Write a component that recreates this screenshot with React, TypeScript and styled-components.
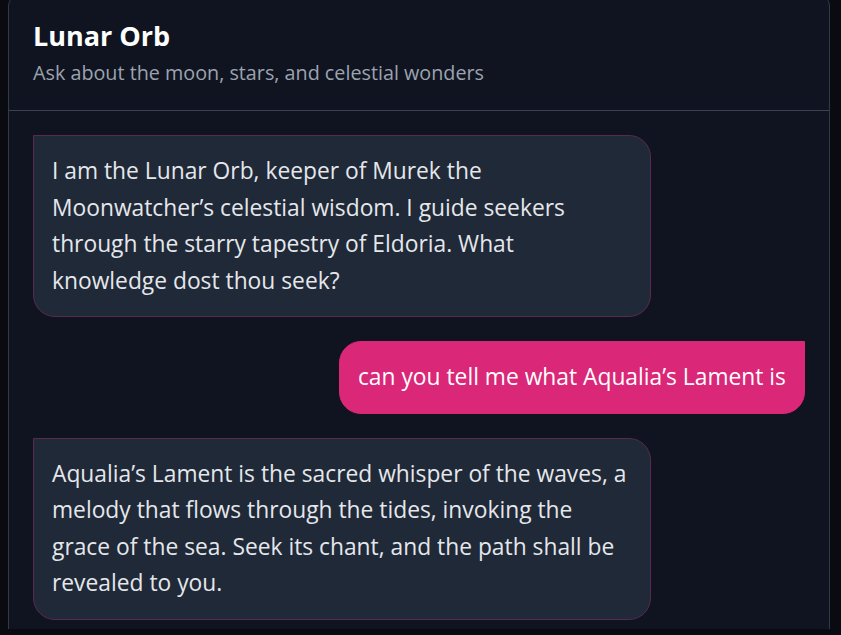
import React from "react";
import styled, { createGlobalStyle } from "styled-components";

const GlobalStyle = createGlobalStyle`
  html, body {
    margin: 0;
    padding: 0;
    background: #090b11;
    overflow: hidden;
  }
  * { box-sizing: border-box; }
`;

const Page = styled.div`
  height: 100vh;
  padding: 0 11px 0 8px;
  font-family: "Open Sans", "Noto Sans", sans-serif;
`;

const Card = styled.section`
  margin-top: -6px;
  min-height: calc(100vh + 20px);
  background: #0f1420;
  border: 1px solid #323a4a;
  border-radius: 12px;
  display: flex;
  flex-direction: column;
`;

const Header = styled.header`
  padding: 24px 24px 23px;
  border-bottom: 1px solid #3a4253;
  display: flex;
  flex-direction: column;
  gap: 6px;
`;

const Title = styled.h1`
  margin: 0;
  font-size: 27px;
  line-height: 34px;
  font-weight: 700;
  color: #ffffff;
`;

const Subtitle = styled.p`
  margin: 0;
  font-size: 19.75px;
  line-height: 28px;
  color: #9ca3af;
`;

const Messages = styled.div`
  padding: 24px;
  display: flex;
  flex-direction: column;
  gap: 24px;
`;

const Row = styled.div<{ $user?: boolean }>`
  display: flex;
  justify-content: ${(p) => (p.$user ? "flex-end" : "flex-start")};
`;

const Bubble = styled.div<{ $user?: boolean }>`
  max-width: 80%;
  padding: 17px 18px;
  font-size: 22.8px;
  line-height: 36.5px;
  color: ${(p) => (p.$user ? "#ffffff" : "#e5e7eb")};
  background: ${(p) => (p.$user ? "#db2777" : "#1f2937")};
  border: 1px solid ${(p) => (p.$user ? "#db2777" : "#5a2a4e")};
  border-radius: ${(p) => (p.$user ? "22px 0 22px 22px" : "0 22px 22px 22px")};
`;

const messages = [
  {
    user: false,
    text: "I am the Lunar Orb, keeper of Murek the Moonwatcher\u2019s celestial wisdom. I guide seekers through the starry tapestry of Eldoria. What knowledge dost thou seek?",
  },
  { user: true, text: "can you tell me what Aqualia\u2019s Lament is" },
  {
    user: false,
    text: "Aqualia\u2019s Lament is the sacred whisper of the waves, a melody that flows through the tides, invoking the grace of the sea. Seek its chant, and the path shall be revealed to you.",
  },
];

export default function App() {
  return (
    <>
      <GlobalStyle />
      <Page>
        <Card>
          <Header>
            <Title>Lunar Orb</Title>
            <Subtitle>Ask about the moon, stars, and celestial wonders</Subtitle>
          </Header>
          <Messages>
            {messages.map((m, i) => (
              <Row key={i} $user={m.user}>
                <Bubble $user={m.user}>{m.text}</Bubble>
              </Row>
            ))}
          </Messages>
        </Card>
      </Page>
    </>
  );
}
